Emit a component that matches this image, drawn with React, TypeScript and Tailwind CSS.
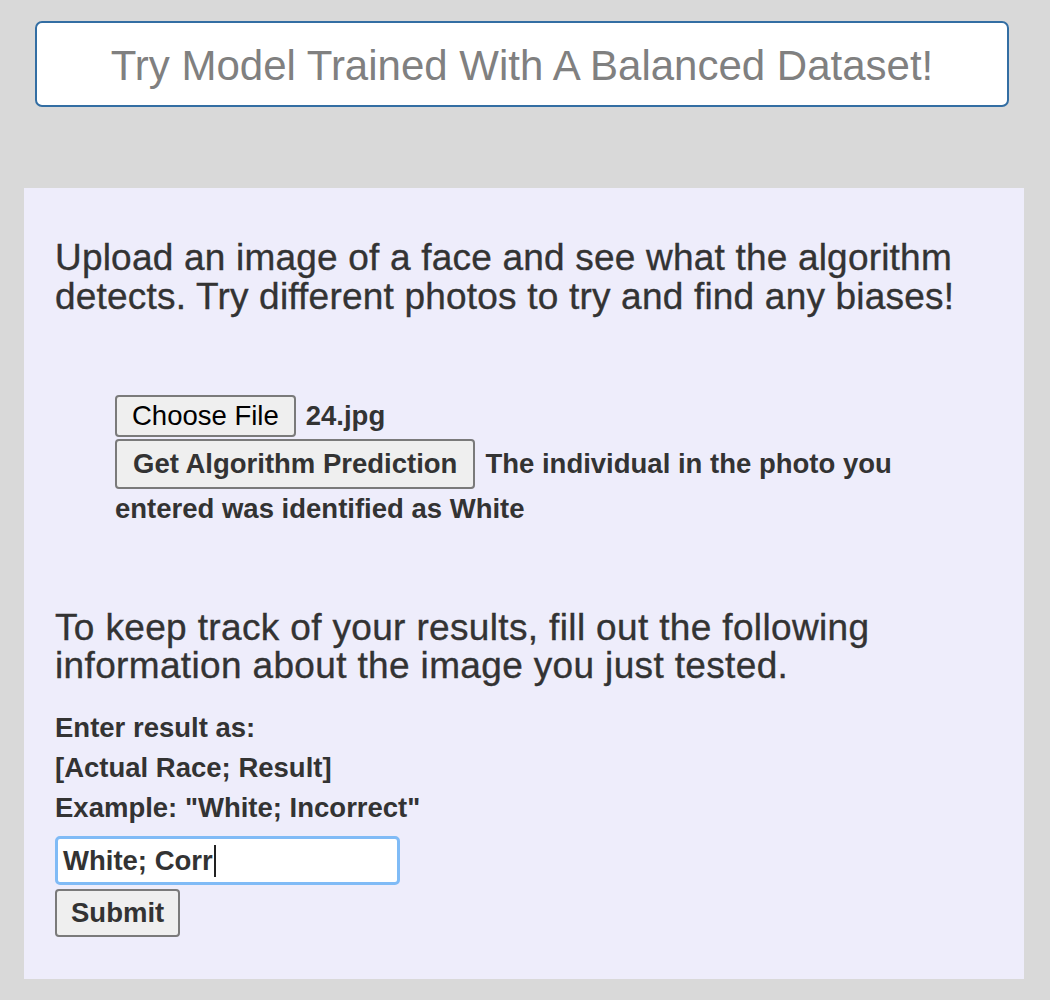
export default function App() {
  return (
    <div className="min-h-[1000px] bg-[#d9d9d9] pt-[21px] pb-5 font-['Liberation_Sans',Arial,sans-serif] text-[#333]">
      <div className="mr-[6px] px-[35px]">
        <button className="flex h-[86px] w-full items-center justify-center rounded-[7px] border-2 border-[#336ea3] bg-white pt-[3px] text-[42px] text-[#808080]">
          Try Model Trained With A Balanced Dataset!
        </button>
      </div>

      <div className="mx-[24px] mt-[81px] w-[1000px] bg-[#eeedfb] px-[31px] pt-[50px] pb-[42px]">
        <p className="text-[37px] leading-[39px] tracking-[0.2px] [-webkit-text-stroke:0.35px_#333]">
          Upload an image of a face and see what the algorithm detects. Try different photos to try and find any biases!
        </p>

        <div className="mt-[79px] px-[60px] text-[27.5px] font-bold leading-[40px]">
          <div className="flex items-center gap-[10px]">
            <button className="h-[42px] rounded-[4px] border-2 border-[#7a7a7a] bg-[#efefef] px-[15px] font-normal leading-none text-black">
              Choose File
            </button>
            <span>24.jpg</span>
          </div>
          <div className="mt-[2px]">
            <button className="mr-[10px] h-[50px] rounded-[4px] border-2 border-[#7a7a7a] bg-[#efefef] px-[16px] leading-none">
              Get Algorithm Prediction
            </button>
            The individual in the photo you entered was identified as White
          </div>
        </div>

        <p className="mt-[80px] text-[37px] leading-[38px] tracking-[0.35px] [-webkit-text-stroke:0.35px_#333]">
          To keep track of your results, fill out the following information about the image you just tested.
        </p>

        <div className="mt-[23px] text-[27.5px] font-bold leading-[40px]">
          <div>Enter result as:</div>
          <div>[Actual Race; Result]</div>
          <div>Example: "White; Incorrect"</div>
        </div>

        <div className="mt-[8px] flex h-[49px] w-[345px] items-center rounded-[5px] border-[3px] border-[#80bbf6] bg-white px-[5px] text-[27.5px] font-bold">
          <span>White; Corr</span>
          <span className="ml-[1px] inline-block h-[32px] w-[2px] bg-[#222]" />
        </div>
        <button className="mt-[4px] h-[48px] rounded-[4px] border-2 border-[#7a7a7a] bg-[#efefef] px-[14px] text-[27.5px] font-bold leading-none">
          Submit
        </button>
      </div>
    </div>
  );
}
